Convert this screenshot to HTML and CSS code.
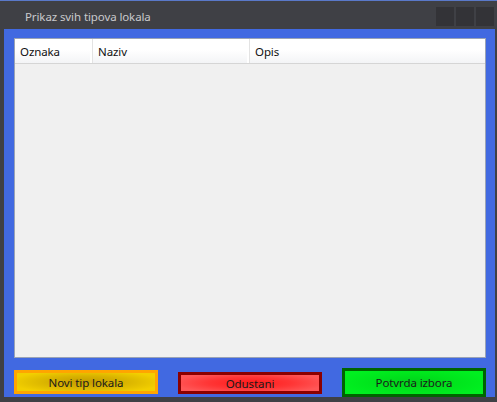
FILE: index.html
```html
<!DOCTYPE html>
<html>
<head>
<meta charset="utf-8">
<link rel="stylesheet" href="styles.css">
</head>
<body>
<div class="window">
  <div class="titlebar">
    <span class="title">Prikaz svih tipova lokala</span>
    <div class="controls">
      <span class="ctl"></span><span class="ctl"></span><span class="ctl"></span>
    </div>
  </div>
  <div class="content">
    <div class="listview">
      <div class="header">
        <div class="col c1">Oznaka</div>
        <div class="col c2">Naziv</div>
        <div class="col c3">Opis</div>
      </div>
    </div>
    <div class="buttons">
      <button class="btn yellow">Novi tip lokala</button>
      <button class="btn red">Odustani</button>
      <button class="btn green">Potvrda izbora</button>
    </div>
  </div>
</div>
</body>
</html>
```

FILE: styles.css
```css
html, body {
  margin: 0;
  padding: 0;
  background: #3f4045;
}
.window {
  width: 497px;
  height: 402px;
  background: #3f4045;
  border-top: 1px solid #5a79c9;
  box-sizing: border-box;
  font-family: "Noto Sans", "DejaVu Sans", sans-serif;
  font-size: 11.5px;
  letter-spacing: -0.1px;
}
.titlebar {
  height: 28px;
  display: flex;
  align-items: flex-start;
  justify-content: space-between;
}
.title {
  color: #c9c9cc;
  margin-left: 25px;
  margin-top: 8px;
  line-height: 16px;
}
.controls {
  display: flex;
  gap: 2px;
  margin-top: 6px;
  margin-right: 3px;
}
.ctl {
  width: 18px;
  height: 19px;
  background: #333337;
}
.content {
  margin-left: 4px;
  margin-right: 2px;
  height: 368px;
  background: #4169e1;
  box-sizing: border-box;
  padding: 9px 9px 0 10px;
}
.listview {
  height: 320px;
  background: #f0f0f0;
  border: 1px solid #9aa3b5;
  box-sizing: border-box;
}
.header {
  height: 25px;
  display: flex;
  background: linear-gradient(#ffffff 0%, #ffffff 45%, #f3f4f6 100%);
  border-bottom: 1px solid #d5d5d5;
  box-sizing: border-box;
}
.col {
  height: 100%;
  box-sizing: border-box;
  padding-left: 5px;
  line-height: 25px;
  color: #101010;
  border-right: 1px solid #e3e3e3;
  box-shadow: inset -2px 0 0 #ffffff;
}
.c1 { width: 78px; }
.c2 { width: 157px; }
.c3 { flex: 1; border-right: none; box-shadow: none; }
.buttons {
  display: flex;
  align-items: flex-start;
  gap: 20px;
  margin-top: 10px;
  height: 29px;
}
.btn {
  width: 144px;
  box-sizing: border-box;
  padding: 0;
  font-family: inherit;
  font-size: 11.5px;
  letter-spacing: -0.1px;
  color: #1a1a1a;
  cursor: pointer;
}
.yellow {
  margin-top: 2px;
  height: 24px;
  border: 3px solid #ffa500;
  background: radial-gradient(ellipse 55% 65% at 50% 50%, #c49c00 0%, #d8b200 50%, #f2cf00 100%);
}
.red {
  margin-top: 4px;
  height: 22px;
  border: 3px solid #8b0000;
  background: radial-gradient(ellipse 55% 65% at 50% 50%, #ff1a1a 0%, #ff3535 55%, #ff5656 100%);
}
.green {
  height: 29px;
  border: 3px solid #006400;
  background: radial-gradient(ellipse 55% 65% at 50% 50%, #00d21a 0%, #00e41c 55%, #00f020 100%);
}
```
